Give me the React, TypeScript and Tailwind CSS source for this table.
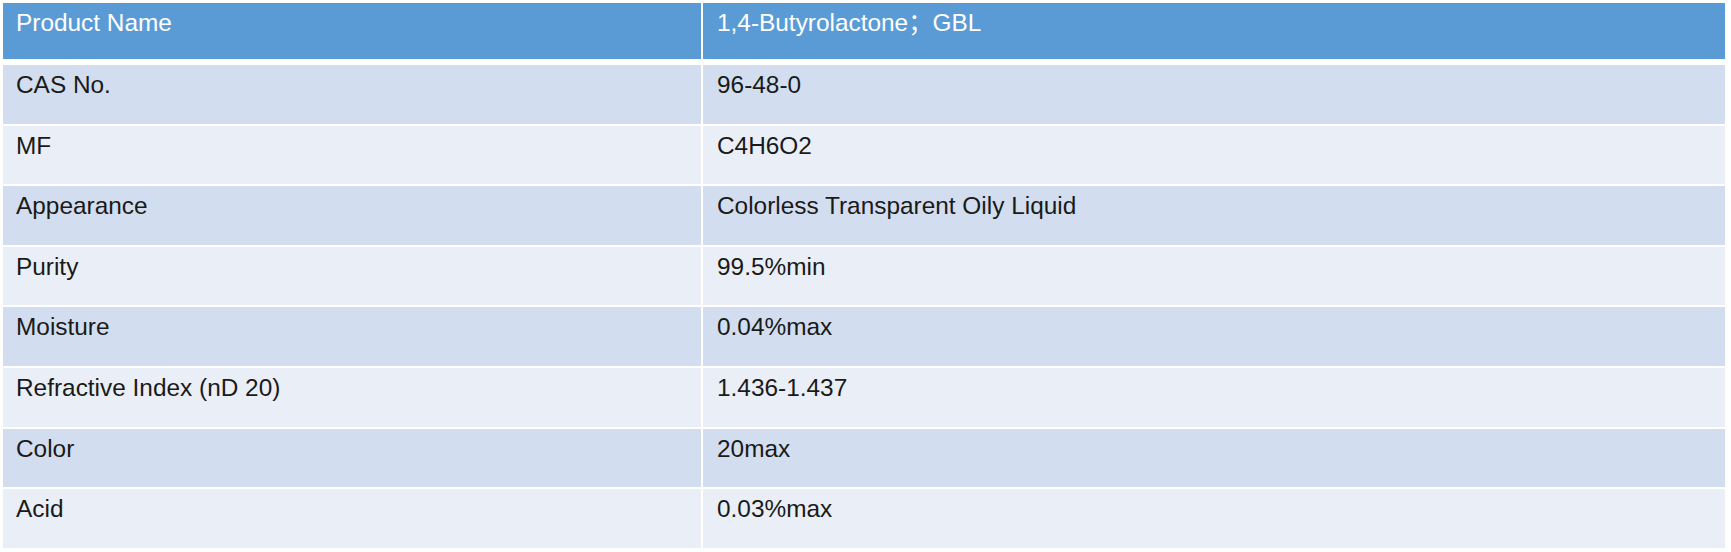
const rows: [string, string][] = [
  ['CAS No.', '96-48-0'],
  ['MF', 'C4H6O2'],
  ['Appearance', 'Colorless Transparent Oily Liquid'],
  ['Purity', '99.5%min'],
  ['Moisture', '0.04%max'],
  ['Refractive Index (nD 20)', '1.436-1.437'],
  ['Color', '20max'],
  ['Acid', '0.03%max'],
];

export default function App() {
  return (
    <div className="w-full h-[552px] bg-white pt-[3px] pl-[3px] font-['Liberation_Sans','Noto_Sans_CJK_SC',Arial,sans-serif] text-[24.4px] leading-[28px]">
      <div className="w-[1722px] flex flex-col">
        {/* header */}
        <div className="grid grid-cols-[698px_1fr] gap-x-[2px] h-[56px] mb-[6px]">
          <div className="bg-[#5b9bd5] text-white pl-[13px] pt-[6px]">Product Name</div>
          <div className="bg-[#5b9bd5] text-white pl-[14px] pt-[6px]">1,4-Butyrolactone；GBL</div>
        </div>

        <div className="flex flex-col gap-y-[2px]">
          {rows.map(([label, value], i) => {
            const bg = i % 2 === 0 ? 'bg-[#d2deef]' : 'bg-[#eaeff7]';
            return (
              <div key={label} className="grid grid-cols-[698px_1fr] gap-x-[2px] h-[58.6px]">
                <div className={`${bg} text-[#1a1a1a] pl-[13px] pt-[6px]`}>{label}</div>
                <div className={`${bg} text-[#1a1a1a] pl-[14px] pt-[6px]`}>{value}</div>
              </div>
            );
          })}
        </div>
      </div>
    </div>
  );
}
